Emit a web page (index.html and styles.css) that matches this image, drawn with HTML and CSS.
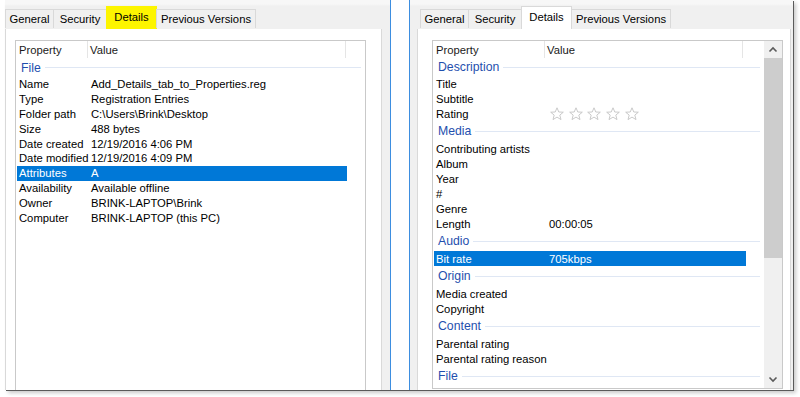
FILE: index.html
```html
<!DOCTYPE html>
<html>
<head>
<meta charset="utf-8">
<link rel="stylesheet" href="styles.css">
</head>
<body>
<div class="frame">
  <section class="pane pane-left">
    <div class="tabs">
      <div class="tab w-gen">General</div>
      <div class="tab w-sec">Security</div>
      <div class="tab w-det sel mark">Details</div>
      <div class="tab w-prev">Previous Versions</div>
    </div>
    <div class="page page-left">
      <div class="lv lv-a">
        <div class="lv-main">
          <div class="lv-head"><div class="hc hc1">Property</div><div class="hc hc2">Value</div></div>
          <div class="grp grp-first"><span>File</span></div>
          <div class="row"><span>Name</span><span>Add_Details_tab_to_Properties.reg</span></div>
          <div class="row"><span>Type</span><span>Registration Entries</span></div>
          <div class="row"><span>Folder path</span><span>C:\Users\Brink\Desktop</span></div>
          <div class="row"><span>Size</span><span>488 bytes</span></div>
          <div class="row"><span>Date created</span><span>12/19/2016 4:06 PM</span></div>
          <div class="row"><span>Date modified</span><span>12/19/2016 4:09 PM</span></div>
          <div class="row on"><span>Attributes</span><span>A</span></div>
          <div class="row"><span>Availability</span><span>Available offline</span></div>
          <div class="row"><span>Owner</span><span>BRINK-LAPTOP\Brink</span></div>
          <div class="row"><span>Computer</span><span>BRINK-LAPTOP (this PC)</span></div>
        </div>
      </div>
    </div>
  </section>
  <div class="gap"></div>
  <section class="pane pane-right">
    <div class="tabs">
      <div class="tab w-gen">General</div>
      <div class="tab w-sec">Security</div>
      <div class="tab w-det sel">Details</div>
      <div class="tab w-prev">Previous Versions</div>
    </div>
    <div class="page page-right">
      <div class="lv lv-b">
        <div class="lv-main">
          <div class="lv-head"><div class="hc hc1">Property</div><div class="hc hc2">Value</div></div>
          <div class="grp grp-first"><span>Description</span></div>
          <div class="row"><span>Title</span><span></span></div>
          <div class="row"><span>Subtitle</span><span></span></div>
          <div class="row"><span>Rating</span><span class="stars">
            <svg viewBox="0 0 14 14" class="star"><polygon points="7,0.8 8.8,5 13.3,5.2 9.8,8.1 11,12.6 7,10.1 3,12.6 4.2,8.1 0.7,5.2 5.2,5"/></svg>
            <svg viewBox="0 0 14 14" class="star"><polygon points="7,0.8 8.8,5 13.3,5.2 9.8,8.1 11,12.6 7,10.1 3,12.6 4.2,8.1 0.7,5.2 5.2,5"/></svg>
            <svg viewBox="0 0 14 14" class="star"><polygon points="7,0.8 8.8,5 13.3,5.2 9.8,8.1 11,12.6 7,10.1 3,12.6 4.2,8.1 0.7,5.2 5.2,5"/></svg>
            <svg viewBox="0 0 14 14" class="star"><polygon points="7,0.8 8.8,5 13.3,5.2 9.8,8.1 11,12.6 7,10.1 3,12.6 4.2,8.1 0.7,5.2 5.2,5"/></svg>
            <svg viewBox="0 0 14 14" class="star"><polygon points="7,0.8 8.8,5 13.3,5.2 9.8,8.1 11,12.6 7,10.1 3,12.6 4.2,8.1 0.7,5.2 5.2,5"/></svg>
          </span></div>
          <div class="grp"><span>Media</span></div>
          <div class="row"><span>Contributing artists</span><span></span></div>
          <div class="row"><span>Album</span><span></span></div>
          <div class="row"><span>Year</span><span></span></div>
          <div class="row"><span>#</span><span></span></div>
          <div class="row"><span>Genre</span><span></span></div>
          <div class="row"><span>Length</span><span>00:00:05</span></div>
          <div class="grp"><span>Audio</span></div>
          <div class="row on"><span>Bit rate</span><span>705kbps</span></div>
          <div class="grp"><span>Origin</span></div>
          <div class="row"><span>Media created</span><span></span></div>
          <div class="row"><span>Copyright</span><span></span></div>
          <div class="grp"><span>Content</span></div>
          <div class="row"><span>Parental rating</span><span></span></div>
          <div class="row"><span>Parental rating reason</span><span></span></div>
          <div class="grp"><span>File</span></div>
        </div>
        <div class="sb">
          <div class="sb-btn"><svg viewBox="0 0 10 7" class="chev"><polyline points="1.5,5.5 5,2 8.5,5.5"/></svg></div>
          <div class="sb-thumb"></div>
          <div class="sb-track"></div>
          <div class="sb-btn"><svg viewBox="0 0 10 7" class="chev"><polyline points="1.5,1.5 5,5 8.5,1.5"/></svg></div>
        </div>
      </div>
    </div>
  </section>
</div>
</body>
</html>
```

FILE: styles.css
```css
html, body {
  margin: 0;
  padding: 0;
  background: #ffffff;
}
body {
  width: 800px;
  height: 397px;
  overflow: hidden;
  font-family: "Liberation Sans", Arial, sans-serif;
  font-size: 11.25px;
  color: #000;
}
.frame {
  display: flex;
  width: 788px;
  height: 390px;
  margin-left: 5px;
  box-shadow: 1px 1px 0 #5a5a5a, 3px 3px 4px rgba(0, 0, 0, 0.22);
  background: #ffffff;
}
.pane {
  display: flex;
  flex-direction: column;
  background: #f0f0f0;
  box-sizing: border-box;
  height: 390px;
  overflow: hidden;
}
.pane-left {
  width: 386px;
  border-right: 1px solid #3d8ee0;
}
.gap {
  width: 18px;
  background: #ffffff;
}
.pane-right {
  width: 384px;
  border-left: 1px solid #3d8ee0;
}
.tabs {
  display: flex;
  align-items: flex-end;
  height: 29px;
  flex: none;
  position: relative;
  z-index: 1;
  background: linear-gradient(#f7f7f7 0, #f7f7f7 4px, #f0f0f0 6px);
}
.pane-left .tabs { padding-left: 0; }
.pane-right .tabs { padding-left: 10px; }
.tab {
  box-sizing: border-box;
  height: 19px;
  margin-bottom: 1px;
  border: 1px solid #d9d9d9;
  border-bottom: none;
  background: #f0f0f0;
  display: flex;
  align-items: center;
  justify-content: center;
  white-space: nowrap;
  margin-right: -1px;
}
.tab.sel {
  height: 23px;
  margin-bottom: 0;
  background: #ffffff;
  padding-bottom: 3px;
}
.tab.mark {
  background: #fdf500;
  border-color: #fdf500;
}
.w-gen { width: 49px; }
.w-sec { width: 54px; }
.w-det { width: 51px; }
.w-prev { width: 100px; }
.page {
  flex: 1;
  background: #ffffff;
  border: 1px solid #d9d9d9;
  border-bottom: none;
  margin-top: -1px;
  padding-top: 11px;
  min-height: 0;
}
.page-left {
  margin-right: 8px;
  padding-left: 9px;
  padding-right: 15px;
}
.page-right {
  margin-left: 7px;
  margin-right: 2px;
  padding-left: 14px;
  padding-right: 7px;
}
.lv {
  display: flex;
  border: 1px solid #c9c9c9;
  background: #ffffff;
  overflow: hidden;
}
.lv-a {
  height: 360px;
  border-bottom: none;
  --c1: 72px;
  --c2: 258px;
  --r1: 71px;
  --r2: 259px;
  --rh: 14.8px;
  --g1: 19px;
}
.lv-b {
  height: 347px;
  --c1: 112px;
  --c2: 198px;
  --r1: 112px;
  --r2: 200px;
  --rh: 15px;
  --g1: 18px;
}
.lv-main {
  flex: 1;
  min-width: 0;
}
.lv-head {
  display: flex;
  height: 17px;
}
.hc {
  display: flex;
  align-items: center;
  border-right: 1px solid #e5e5e5;
  color: #1a1a1a;
}
.hc1 { width: var(--c1); padding-left: 3px; box-sizing: border-box; }
.hc2 { width: var(--c2); padding-left: 2px; box-sizing: border-box; }
.grp {
  display: flex;
  align-items: center;
  height: 20px;
  padding-left: 5px;
  padding-right: 4px;
  color: #1f4fae;
  font-size: 12.25px;
}
.grp-first { height: var(--g1); }
.grp::after {
  content: "";
  flex: 1;
  height: 1px;
  margin-left: 4px;
  background: #dfe7f4;
}
.row {
  display: grid;
  grid-template-columns: var(--r1) var(--r2);
  height: var(--rh);
  align-items: center;
  margin-left: 1px;
  width: calc(var(--r1) + var(--r2));
  white-space: nowrap;
}
.row > span:first-child { padding-left: 2px; }
.row > span:last-child { padding-left: 3px; }
.row.on {
  background: #0078d7;
  color: #ffffff;
}
.stars {
  display: flex;
  align-items: center;
  padding-left: 4px !important;
}
.star {
  width: 14px;
  height: 14px;
  margin-right: 4.7px;
  fill: none;
  stroke: #c4c4c4;
  stroke-width: 0.9;
}
.sb {
  width: 18px;
  display: flex;
  flex-direction: column;
  background: #f0f0f0;
}
.sb-btn {
  height: 17px;
  display: flex;
  align-items: center;
  justify-content: center;
  background: #f0f0f0;
}
.chev {
  width: 10px;
  height: 7px;
  fill: none;
  stroke: #5a5a5a;
  stroke-width: 1.6;
}
.sb-thumb {
  height: 200px;
  background: #cdcdcd;
}
.sb-track {
  flex: 1;
}
```
